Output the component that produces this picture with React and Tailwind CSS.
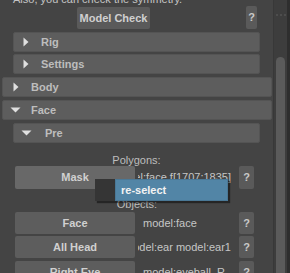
import React from 'react';

const font = "font-['Liberation_Sans',Arial,sans-serif]";

function RightTri() {
  return (
    <svg width="6" height="10" viewBox="0 0 6 10" className="shrink-0">
      <path d="M0.5 0.5 L5.5 5 L0.5 9.5 Z" fill="#e0e0e0" />
    </svg>
  );
}

function DownTri() {
  return (
    <svg width="11" height="6" viewBox="0 0 11 6" className="shrink-0">
      <path d="M0.5 0.5 L10.5 0.5 L5.5 5.5 Z" fill="#e0e0e0" />
    </svg>
  );
}

function FrameBar({ label, open, className, triPad, textPad }) {
  return (
    <div
      className={`h-[20px] shrink-0 flex items-center rounded-[2px] bg-[#5d5d5d] border border-[#545454] ${className}`}
    >
      <div className={`${triPad} flex items-center`}>{open ? <DownTri /> : <RightTri />}</div>
      <span className={`${textPad} text-[11px] font-bold text-[#bdbdbd] leading-none`}>{label}</span>
    </div>
  );
}

function Help({ className = '' }) {
  return (
    <div
      className={`flex items-center justify-center rounded-[2px] bg-[#5a5a5a] text-[11px] font-bold text-[#c9c9c9] ${className}`}
    >
      ?
    </div>
  );
}

function ObjectRow({ label, value, scrolled, light, className = '' }) {
  return (
    <div className={`shrink-0 flex items-stretch ${className}`}>
      <div
        className={`w-[120px] flex items-center justify-center rounded-[2px] text-[11px] font-bold text-[#d0d0d0] ${
          light ? 'bg-[#686868]' : 'bg-[#5d5d5d]'
        }`}
      >
        {label}
      </div>
      <div
        className={`ml-[3px] w-[97px] flex items-center overflow-hidden whitespace-nowrap text-[11px] text-[#c6c6c6] ${
          scrolled ? 'justify-end pr-[4px]' : 'justify-start pl-[5px]'
        }`}
      >
        <span className="shrink-0">{value}</span>
      </div>
      <Help className="ml-[4px] w-[15px]" />
    </div>
  );
}

export default function App() {
  return (
    <div className={`relative w-[290px] h-[273px] overflow-hidden bg-[#444444] flex items-start ${font}`}>
      {/* Main column */}
      <div className="w-[273px] flex flex-col">
        <div className="mt-[-7px] h-[13px] shrink-0 pl-[13px] text-[11px] leading-[13px] text-[#c4c4c4] whitespace-nowrap">
          Also, you can check the symmetry.
        </div>

        {/* Model Check row */}
        <div className="mt-[1px] h-[22px] shrink-0 flex">
          <div className="ml-[77px] w-[73px] flex items-center justify-center rounded-[2px] bg-[#5a5a5a] text-[11px] font-bold text-[#d0d0d0]">
            Model Check
          </div>
          <Help className="ml-[96px] w-[11px] -mt-[1px]" />
        </div>

        <FrameBar label="Rig" className="mt-[3px] mx-[13px]" triPad="pl-[9px]" textPad="pl-[12px]" />
        <FrameBar label="Settings" className="mt-[2px] mx-[13px]" triPad="pl-[9px]" textPad="pl-[12px]" />
        <FrameBar label="Body" className="mt-[3px] ml-[2px] mr-[1px]" triPad="pl-[10px]" textPad="pl-[12px]" />
        <FrameBar label="Face" open className="mt-[3px] ml-[2px] mr-[1px]" triPad="pl-[7px]" textPad="pl-[10px]" />
        <FrameBar label="Pre" open className="mt-[3px] mx-[13px]" triPad="pl-[7px]" textPad="pl-[13px]" />

        {/* Pre contents */}
        <div className="pl-[15px] flex flex-col">
          <div className="mt-[11px] h-[12px] shrink-0 w-[243px] text-center text-[11px] leading-[13px] text-[#bdbdbd]">
            Polygons:
          </div>
          <ObjectRow label="Mask" value="model:face.f[1707:1835]" scrolled light className="h-[23px]" />
          <div className="mt-[9px] h-[13px] shrink-0 w-[244px] text-center text-[11px] leading-[13px] text-[#bdbdbd]">
            Objects:
          </div>
          <ObjectRow label="Face" value="model:face" className="mt-[1px] h-[22px]" />
          <ObjectRow label="All Head" value="model:ear model:ear1" scrolled className="mt-[2px] h-[22px]" />
          <ObjectRow label="Right Eye" value="model:eyeball_R" className="mt-[3px] h-[22px]" />
        </div>
      </div>

      {/* Scrollbar */}
      <div className="w-[14px] h-full bg-[#3d3d3d] border-l border-[#383838] flex flex-col items-center">
        <div className="mt-[14px] flex gap-[2px]">
          <div className="w-[2px] h-[2px] bg-[#4d4d4d]" />
          <div className="w-[2px] h-[2px] bg-[#4d4d4d]" />
          <div className="w-[2px] h-[2px] bg-[#4d4d4d]" />
        </div>
        <div className="mt-[41px] w-[9px] flex-1 rounded-t-[5px] bg-[#5b5b5b]" />
      </div>
      <div className="w-[3px] h-full bg-[#2e2e2e]" />

      {/* Context popup */}
      <div className="absolute left-[95px] top-[179px] w-[133px] h-[22px] flex shadow-[2px_2px_1px_rgba(0,0,0,0.45)]">
        <div className="w-[20px] bg-[#353535]" />
        <div className="flex-1 bg-[#5285a6] border border-[#4a7896] flex items-center pl-[5px] text-[11px] font-bold text-[#f2f2f2]">
          re-select
        </div>
      </div>
    </div>
  );
}
